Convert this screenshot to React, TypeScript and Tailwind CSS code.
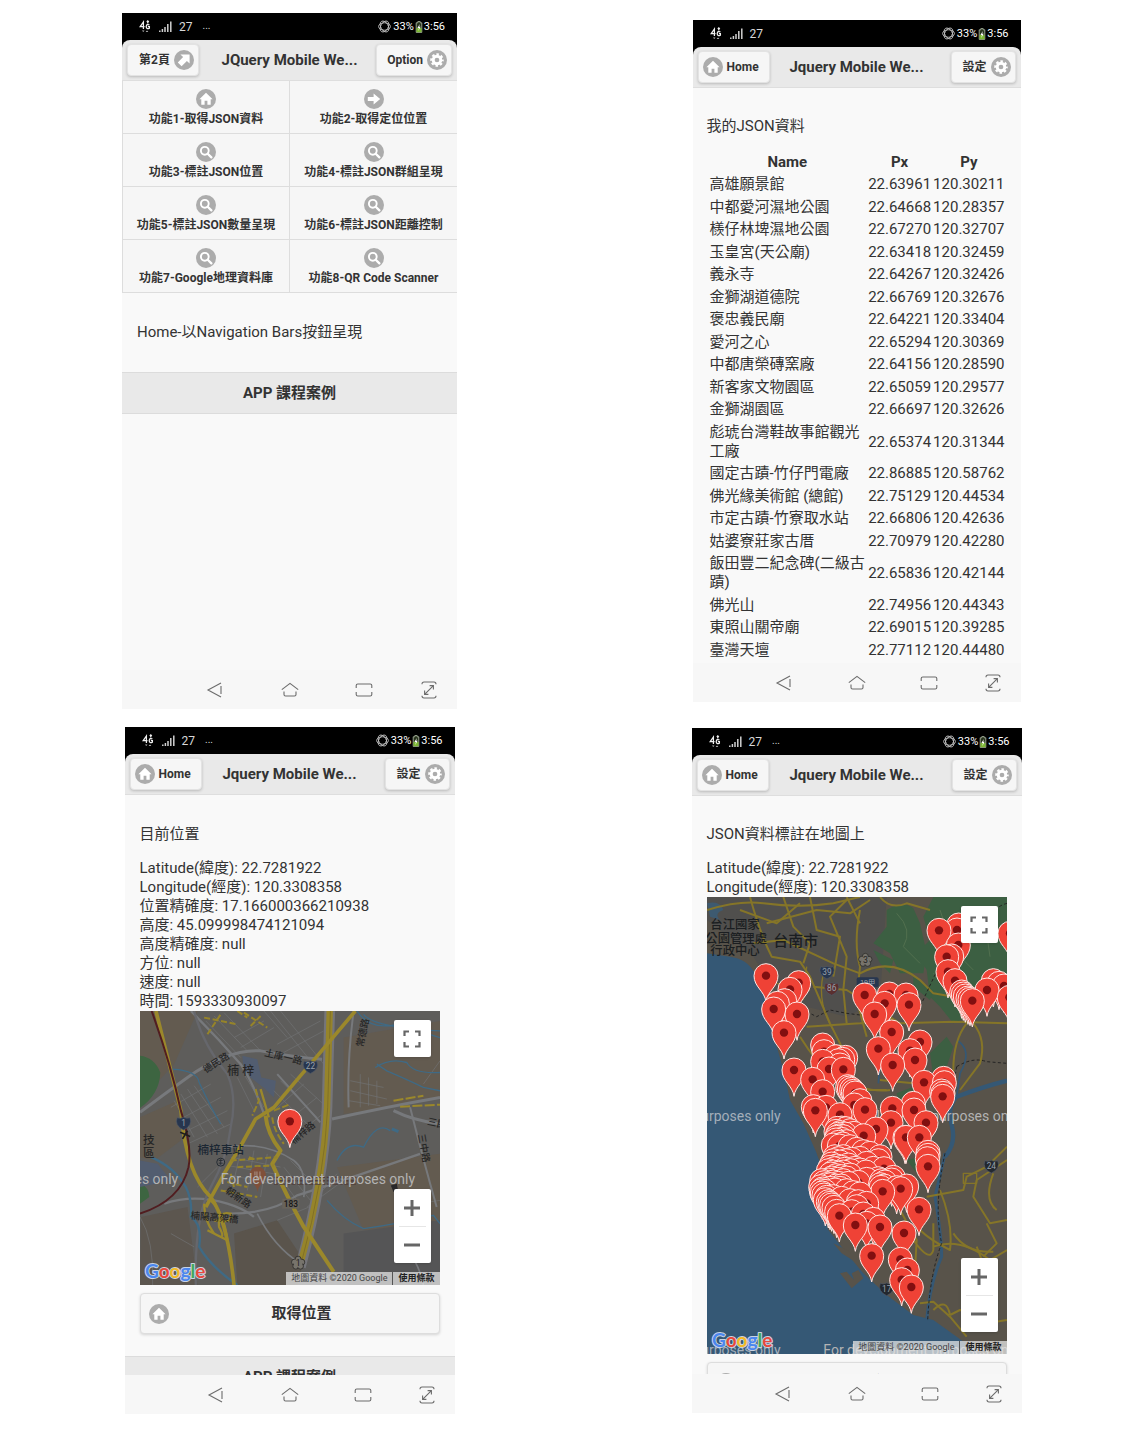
import type { ReactNode } from "react";

/* ---------- disc icons ---------- */

type IconName = "home" | "arrowRight" | "arrowUpRight" | "search" | "gear";

const glyphs: Record<IconName, ReactNode> = {
  home: <path d="M10 3.8 L3.4 10.2 L5.3 10.2 L5.3 15.8 L8.6 15.8 L8.6 11.8 L11.4 11.8 L11.4 15.8 L14.7 15.8 L14.7 10.2 L16.6 10.2 Z" fill="#fff" />,
  arrowRight: <path d="M3.8 8 H9.6 V4.4 L16.2 10 L9.6 15.6 V12 H3.8 Z" fill="#fff" />,
  arrowUpRight: <path d="M6.4 4.4 H15.6 V13.6 L12.9 10.9 L7.6 16.2 L3.8 12.4 L9.1 7.1 Z" fill="#fff" />,
  search: (
    <g fill="none" stroke="#fff">
      <circle cx="8.8" cy="8.8" r="3.9" strokeWidth="1.9" />
      <path d="M11.7 11.7 L15.4 15.4" strokeWidth="2.3" strokeLinecap="round" />
    </g>
  ),
  gear: (
    <g>
      <circle cx="10" cy="10" r="5.7" fill="none" stroke="#fff" strokeWidth="2.1" strokeDasharray="2.5 1.976" strokeDashoffset="1.25" />
      <circle cx="10" cy="10" r="3.8" fill="none" stroke="#fff" strokeWidth="2.9" />
    </g>
  ),
};

function Disc({ name }: { name: IconName }) {
  return (
    <svg viewBox="0 0 20 20" className="size-5 shrink-0" aria-hidden="true">
      <circle cx="10" cy="10" r="10" fill="#acacac" />
      {glyphs[name]}
    </svg>
  );
}

/* ---------- phone frame ---------- */

function StatusBar({ more }: { more: boolean }) {
  return (
    <div className="flex h-[27px] shrink-0 items-center justify-between bg-black pr-3 pl-[17px] text-[12px] leading-none text-[#d8d8d8]">
      <div className="flex items-center">
        <svg viewBox="0 0 11 13" className="h-[13px] w-3" aria-hidden="true">
          <g fill="none" stroke="#f0f0f0" strokeWidth="1.25">
            <path d="M3.9 9 V2 L0.7 6.6 H5" />
            <path d="M9.9 4.9 Q7 3.6 6.7 6.6 Q7 9.6 9.9 8.2 V6.6 H8.4" />
            <path d="M8.3 3.4 V1 M7.3 2 L8.3 1 L9.3 2" />
          </g>
          <path d="M2.5 10.5 H5 L3.7 12Z M6.2 12 H8.8 L7.5 10.5Z" fill="#bbb" />
        </svg>
        <svg viewBox="0 0 13 11" className="ml-2 h-[11px] w-[13px]" aria-hidden="true">
          <path d="M0.8 9.5 V11 M3.4 8 V11 M6 6 V11 M8.8 3 V11 M11.8 0.5 V11" stroke="#d0d0d0" strokeWidth="1.5" />
        </svg>
        <span className="ml-[7px]">27</span>
        {more && <span className="ml-2.5 pb-0.5 text-[10px]">...</span>}
      </div>
      <div className="flex items-center text-[11px] text-white">
        <svg viewBox="0 0 14 14" className="mr-0.5 size-[13px]" aria-hidden="true">
          <g fill="none" stroke="#c9c9c9" strokeWidth="0.9">
            <ellipse cx="7" cy="7" rx="6.4" ry="4" />
            <ellipse cx="7" cy="7" rx="6.4" ry="4" transform="rotate(60 7 7)" />
            <ellipse cx="7" cy="7" rx="6.4" ry="4" transform="rotate(120 7 7)" />
          </g>
        </svg>
        <span>33%</span>
        <svg viewBox="0 0 8 12" className="mx-px h-3 w-2" aria-hidden="true">
          <path d="M2.8 0.6 H5.2 V1.8 H6.8 V11.4 H1.2 V1.8 H2.8Z" fill="#27331c" stroke="#b9c4ae" strokeWidth="0.8" />
          <rect x="1.5" y="7" width="5" height="4.2" fill="#7cb733" />
          <path d="M4.8 3 L2.4 7 H3.9 L3.3 10 L5.7 5.8 H4.2Z" fill="#fff" />
        </svg>
        <span>3:56</span>
      </div>
    </div>
  );
}

const headerButton =
  "flex h-8 items-center gap-1 rounded border border-[#e3e3e3] bg-[#f6f6f6] px-1 text-[12px] font-bold text-[#333] shadow-[0_1px_3px_rgba(0,0,0,0.2)]";

function Header({ title, first }: { title: string; first?: boolean }) {
  return (
    <div className="shrink-0 bg-black">
      <header className="grid h-[41px] grid-cols-[1fr_auto_1fr] items-center rounded-t-lg border-b border-[#dedede] bg-[#e9e9e9] px-[5px]">
        {first ? (
          <a href="#page2" className={`${headerButton} justify-self-start pl-[11px]`}>
            第2頁
            <Disc name="arrowUpRight" />
          </a>
        ) : (
          <a href="#home" className={`${headerButton} justify-self-start pr-[10px]`}>
            <Disc name="home" />
            Home
          </a>
        )}
        <h1 className="text-[15px] leading-5 font-bold whitespace-nowrap text-[#333]">{title}</h1>
        <a href="#settings" className={`${headerButton} justify-self-end pl-[10px]`}>
          {first ? "Option" : "設定"}
          <Disc name="gear" />
        </a>
      </header>
    </div>
  );
}

const navKeys: { label: string; art: ReactNode }[] = [
  { label: "Back", art: <path d="M15 2 L2 9 L15 16 M15 5 V13" /> },
  { label: "Home screen", art: <path d="M0.8 8.6 L9 2.4 L17.2 8.6 M3 10.5 V13.6 Q3 15 4.5 15 H13.5 Q15 15 15 13.6 V10.5" /> },
  { label: "Recent apps", art: <path d="M1.2 7 V4.6 Q1.2 3 2.8 3 H15.2 Q16.8 3 16.8 4.6 V7 M1.2 11 V13.4 Q1.2 15 2.8 15 H15.2 Q16.8 15 16.8 13.4 V11" /> },
  {
    label: "Full screen",
    art: <path d="M2 3.2 Q2 1 4 1 H14 Q16 1 16 3.2 M2 14.8 Q2 17 4 17 H14 Q16 17 16 14.8 M4.6 13.4 L13.4 4.6 M9.6 4.6 H13.4 V8.4 M4.6 9.6 V13.4 H8.4" />,
  },
];

function BottomBar() {
  return (
    <div className="relative grid h-[39px] shrink-0 grid-cols-[4fr_4fr_4fr_3fr] items-center justify-items-center bg-[#f7f7f7] pl-[16.7%]">
      {navKeys.map((k) => (
        <button key={k.label} type="button" aria-label={k.label}>
          <svg viewBox="0 0 18 18" className="size-[18px]" fill="none" stroke="#6c6c6c" strokeWidth="1.1">
            {k.art}
          </svg>
        </button>
      ))}
    </div>
  );
}

function Phone({ size, title, first, more = true, children }: { size: string; title: string; first?: boolean; more?: boolean; children: ReactNode }) {
  return (
    <section className={`flex w-full flex-col overflow-hidden bg-[#f9f9f9] ${size}`}>
      <StatusBar more={more} />
      <Header title={title} first={first} />
      <div className="min-h-0 flex-1 overflow-hidden">{children}</div>
      <BottomBar />
    </section>
  );
}

function Footer() {
  return (
    <footer className="border-y border-[#dcdcdc] bg-[#e9e9e9] py-2.5 text-center text-[15px] leading-5 font-bold">APP 課程案例</footer>
  );
}

/* ---------- maps ---------- */

function Pin({ x, y }: { x: number; y: number }) {
  return (
    <g transform={`translate(${x} ${y})`}>
      <path d="M0 79 C-4 46 -36 34 -36 0 A36 36 0 0 1 36 0 C36 34 4 46 0 79Z" fill="#ef4236" stroke="#ffe6e3" strokeWidth="3" />
      <circle r="12.5" fill="#820f10" />
    </g>
  );
}

function Watermark({ x, y }: { x: number; y: number }) {
  return (
    <text x={x} y={y} fontSize="42" fill="#b3b3b3">
      For development purposes only
    </text>
  );
}

function Shield({ x, y, label, fill = "#27364f" }: { x: number; y: number; label: string; fill?: string }) {
  return (
    <g transform={`translate(${x} ${y})`}>
      <path d="M-19 -17 Q-9 -13 0 -18 Q9 -13 19 -17 Q24 -6 19 4 Q13 15 0 20 Q-13 15 -19 4 Q-24 -6 -19 -17Z" fill={fill} stroke="#4e5866" strokeWidth="2" />
      <text y="8" fontSize="25" textAnchor="middle" fill="#98a0ab">
        {label}
      </text>
    </g>
  );
}

function Plum({ x, y, label }: { x: number; y: number; label: string }) {
  return (
    <g transform={`translate(${x} ${y})`}>
      <g fill="#77746c" stroke="#2d2c2a" strokeWidth="2.5">
        <circle cx="0" cy="-11" r="9" />
        <circle cx="-11" cy="-2" r="9" />
        <circle cx="11" cy="-2" r="9" />
        <circle cx="-7" cy="10" r="9" />
        <circle cx="7" cy="10" r="9" />
      </g>
      <circle r="13" fill="#77746c" />
      <text y="9" fontSize="26" textAnchor="middle" fill="#222">
        {label}
      </text>
    </g>
  );
}

const logoLetters: [string, string][] = [
  ["G", "#4b86ee"],
  ["o", "#e8483c"],
  ["o", "#f2b928"],
  ["g", "#4b86ee"],
  ["l", "#3fa95c"],
  ["e", "#e8483c"],
];

function MapFrame({ children }: { children: ReactNode }) {
  return (
    <div className="relative overflow-hidden">
      {children}
      <button type="button" aria-label="全螢幕" className="absolute top-[9px] right-[9px] flex size-[37px] items-center justify-center rounded-xs bg-white shadow-sm">
        <svg viewBox="0 0 18 18" className="size-[18px]" fill="none" stroke="#666" strokeWidth="2.2">
          <path d="M1.5 6 V1.5 H6 M12 1.5 H16.5 V6 M16.5 12 V16.5 H12 M6 16.5 H1.5 V12" />
        </svg>
      </button>
      <div className="absolute right-[9px] bottom-[22px] flex w-[37px] flex-col items-center rounded-xs bg-white shadow-sm">
        <button type="button" aria-label="放大" className="flex h-[37px] w-full items-center justify-center">
          <svg viewBox="0 0 18 18" className="size-[18px]" stroke="#666" strokeWidth="3">
            <path d="M1 9 H17 M9 1 V17" />
          </svg>
        </button>
        <div className="h-px w-[27px] bg-[#e6e6e6]" />
        <button type="button" aria-label="縮小" className="flex h-9 w-full items-center justify-center">
          <svg viewBox="0 0 18 18" className="size-[18px]" stroke="#666" strokeWidth="3">
            <path d="M1 9 H17" />
          </svg>
        </button>
      </div>
      <svg viewBox="0 0 66 26" className="absolute bottom-0 left-[3px] h-[26px] w-[66px]" role="img" aria-label="Google">
        <text x="2" y="19" fontSize="19" fontFamily="Lato, sans-serif" fontWeight="700" stroke="#c9d3e2" strokeWidth="2" strokeLinejoin="round" paintOrder="stroke">
          {logoLetters.map(([ch, color], i) => (
            <tspan key={i} fill={color}>
              {ch}
            </tspan>
          ))}
        </text>
      </svg>
      <div className="absolute right-0 bottom-0 flex h-[13px] items-center text-[9px] leading-[13px] text-[#444]">
        <span className="bg-[#e4e4e4]/75 px-[5px]">地圖資料 ©2020 Google</span>
        <a href="#terms" className="border-l border-[#555] bg-[#e4e4e4]/75 px-[5px] font-bold text-[#222]">
          使用條款
        </a>
      </div>
    </div>
  );
}

function CityMap() {
  return (
    <MapFrame>
      <svg viewBox="27 30 903 825" className="block w-full" role="img" aria-label="目前位置地圖">
        <rect x="27" y="30" width="903" height="825" fill="#5e5d5b" />
        <g fill="#635b50">
          <path d="M27 30 H200 L130 190 L27 300Z" />
          <path d="M640 110 L930 60 V290 L780 320 L640 340Z" />
          <path d="M27 350 L140 300 L150 420 L70 480 L27 470Z" />
          <path d="M620 500 L930 460 V680 L700 690Z" />
          <path d="M310 700 L440 660 L520 780 L500 855 H320Z" fill="#5a544c" />
          <path d="M30 650 L170 620 L200 855 H27Z" fill="#5c564f" />
        </g>
        <path d="M640 700 L930 660 V855 H640Z" fill="#555556" />
        <path d="M27 165 Q70 170 88 215 Q86 280 27 322Z M27 550 Q55 560 55 590 L27 610Z" fill="#3d6541" />
        <path d="M335 165 L380 175 L392 230 L436 240 L430 290 L400 262 L340 215Z M27 480 L80 490 L120 540 L27 560Z" fill="#525d70" />
        {/* street grid */}
        <g fill="none" stroke="#717274" strokeWidth="2">
          <path d="M225 60 L330 170 M250 45 L350 150 M280 35 L390 150 M310 110 L400 60 M330 140 L430 80 M420 30 L540 180 M450 30 L580 190 M440 130 L570 60 M450 160 L580 90 M400 30 L470 110" />
          <path d="M130 300 L190 410 M150 280 L230 410 M170 265 L260 400 M190 255 L280 380 M120 320 L240 250 M140 360 L270 290 M150 400 L290 330 M170 430 L300 370 M320 230 L370 330 M340 220 L400 320" />
          <path d="M450 240 L560 350 M430 270 L540 380 M480 220 L590 320 M430 330 L520 250 M460 370 L560 290 M500 400 L590 330 M660 240 L760 260 M660 270 L770 295 M690 220 V320 M715 230 V315 M740 240 V310 M655 300 L750 315" />
          <path d="M200 560 L260 500 M300 470 L450 500 M290 495 L430 520 M280 520 L420 550 M330 450 L310 540 M370 450 L350 570 M410 460 L390 590 M440 520 L500 600 M460 500 L540 600 M480 480 L560 560 M560 590 L620 520 M530 620 L640 540" />
          <path d="M440 660 L560 610 M27 650 Q70 720 65 855 M120 700 L190 740 M880 250 L930 180 M800 620 L930 600" />
        </g>
        <g fill="none" stroke="#77797c" strokeWidth="9">
          <path d="M27 335 Q100 280 170 230 Q290 145 390 150 Q500 170 575 175" />
          <path d="M180 30 Q260 110 330 190 Q370 250 400 340" strokeWidth="7" />
          <path d="M605 355 Q760 320 930 290 M790 330 Q850 360 930 370" />
          <path d="M300 640 Q420 640 500 585 Q640 540 870 460" strokeWidth="7" />
          <path d="M100 610 Q190 580 290 610 Q340 625 370 650" strokeWidth="7" />
          <path d="M190 30 Q215 130 290 220 Q320 290 300 380 Q290 470 240 560 Q190 650 195 855" stroke="#66676c" strokeWidth="7" />
          <path d="M670 30 Q650 180 655 320 M840 320 Q880 480 920 620 M440 220 L570 365" strokeWidth="6" />
          <path d="M290 440 Q400 420 490 480 Q530 510 520 590 M380 640 Q430 740 510 790 M800 730 Q860 760 880 855" strokeWidth="5" />
        </g>
        <g fill="none" stroke="#3f6a85" strokeWidth="4">
          <path d="M125 205 Q200 210 205 245 Q240 320 270 370 M680 30 Q720 90 800 70 L930 110 M700 40 Q730 80 930 90" />
          <path d="M735 200 Q780 170 830 185 Q850 220 930 215 M740 190 L770 210 Q840 240 880 260 L930 270 M620 480 Q650 420 700 440 Q740 360 780 390" />
          <path d="M590 600 Q640 660 700 685 Q810 670 910 645 L930 670" />
          <path d="M60 470 Q130 500 165 560 Q185 600 180 650 Q215 670 205 740 Q240 800 320 855" strokeWidth="7" />
          <path d="M785 385 L805 393" strokeWidth="9" />
        </g>
        {/* trunk roads */}
        <g fill="none" strokeLinejoin="round">
          <path d="M598 30 L590 320 Q580 540 510 800" stroke="#75757a" strokeWidth="32" />
          <path d="M598 30 L590 320 Q580 540 510 790" stroke="#96842a" strokeWidth="19" />
          <path d="M600 30 L592 320 Q582 540 512 790" stroke="#766723" strokeWidth="2" />
          <path d="M675 30 L540 190 Q480 260 430 320 L375 355 Q330 440 280 520 L225 620" stroke="#9b882b" strokeWidth="11" />
          <path d="M75 30 L150 330 Q165 520 240 590 Q290 660 310 855" stroke="#9b882b" strokeWidth="11" />
          <path d="M405 345 Q410 400 450 450 L425 490 Q470 590 520 680 L610 815" stroke="#9b882b" strokeWidth="12" />
          <path d="M390 265 L415 350 M220 610 Q220 660 250 700 Q290 725 265 680 Q260 630 300 640 Q310 670 250 660 M240 600 Q280 640 290 720 L230 690" stroke="#9b882b" strokeWidth="7" />
          <path d="M375 265 L385 300 L365 345 M425 350 Q430 390 460 430 M430 330 L480 310" stroke="#968429" strokeWidth="6" strokeDasharray="20 7" />
          <path d="M220 50 L320 70 M340 35 L410 80 M230 100 L270 40 M360 75 L390 45 M320 30 L350 50 M270 570 L380 590 M290 545 L350 560 M300 480 L440 470 M320 500 L430 495 M300 520 L310 560 M355 470 L380 480" stroke="#968429" strokeWidth="6" strokeDasharray="18 8" />
          <path d="M790 300 L880 285 M810 318 L930 312" stroke="#9b882b" strokeWidth="6" strokeDasharray="30 7" />
          <path d="M62 30 Q120 190 150 330 Q185 440 173 500 Q150 600 27 640" stroke="#511d20" strokeWidth="6" />
        </g>
        <path d="M148 395 L178 408 M155 415 L170 390" stroke="#1d1d1d" strokeWidth="5" />
        {/* dining place with its worn label */}
        <path d="M381 575 C378 550 356 545 356 524 A25 25 0 0 1 406 524 C406 545 384 550 381 575Z" fill="#80503a" />
        <path d="M373 513 V525 M379 513 V536 M388 513 V536" stroke="#a9948a" strokeWidth="3" />
        <path d="M430 531 H680 M430 541 H680 M430 551 H680" fill="none" stroke="#513f3b" strokeWidth="4" strokeDasharray="12 5 18 6 7 5" />
        <g fontSize="29" fill="#262626" fontWeight="500">
          <text transform="translate(225 218) rotate(-33)">德民路</text>
          <text transform="translate(400 165) rotate(13)">土庫一路</text>
          <text transform="translate(698 140) rotate(-78)">常德路</text>
          <text transform="translate(490 432) rotate(-40)">楠梓路</text>
          <text transform="translate(282 575) rotate(35)">朝新路</text>
          <text transform="translate(178 655) rotate(5)">楠陽高架橋</text>
          <text transform="translate(864 402) rotate(80)">三中路</text>
          <text transform="translate(890 372) rotate(12)">三民</text>
          <text x="290" y="224" fontSize="36">
            楠 梓
          </text>
          <text x="200" y="461" fontSize="35" fill="#1c2733">
            楠梓車站
          </text>
          <text x="36" y="431" fontSize="35">
            技
          </text>
          <text x="36" y="470" fontSize="35">
            區
          </text>
          <rect x="455" y="595" width="52" height="30" fill="#68635b" />
          <text x="460" y="619" fontSize="25" fill="#161616">
            183
          </text>
        </g>
        <circle cx="270" cy="485" r="12" fill="none" stroke="#252c33" strokeWidth="3" />
        <path d="M264 480 H276 M264 488 H276 M270 476 V494" stroke="#252c33" strokeWidth="2.5" />
        <path d="M782 555 L800 550 L804 572 L790 575Z" fill="#28282a" />
        <Shield x={540} y={198} label="22" />
        <Shield x={158} y={368} label="1" />
        <Plum x={503} y={788} label="1" />
        <Watermark x={270} y={551} />
        <text x="142" y="551" fontSize="42" fill="#b3b3b3" textAnchor="end">
          es only
        </text>
        <Pin x={478} y={362} />
      </svg>
    </MapFrame>
  );
}

const pins: [number, number][] = [
  [198, 257], [296, 278], [270, 298], [254, 332], [232, 340], [221, 357], [291, 372], [252, 428], [282, 540],
  [717, 121], [776, 105], [771, 120], [775, 165], [755, 198], [740, 200], [744, 245], [765, 272], [785, 306], [790, 312],
  [796, 318], [804, 324], [810, 328], [817, 332], [861, 300], [880, 272], [897, 280], [912, 288], [930, 130], [928, 322],
  [494, 315], [568, 312], [618, 315], [554, 340], [627, 344], [524, 372], [575, 426], [535, 476], [578, 525],
  [660, 456], [630, 482], [645, 510],
  [368, 465], [372, 485], [437, 502], [408, 500], [368, 514], [428, 508], [415, 512], [387, 537], [420, 525], [430, 538],
  [338, 568], [368, 605], [443, 590], [448, 594], [455, 598], [460, 604], [465, 609], [480, 632], [463, 645], [495, 659],
  [340, 650], [378, 652], [346, 661], [420, 674], [577, 655], [640, 640], [642, 660], [573, 698], [678, 698], [528, 717],
  [672, 577], [731, 565], [733, 578], [725, 603], [729, 610], [728, 619],
  [412, 715], [425, 714], [438, 716], [450, 722], [408, 724], [420, 728], [435, 732], [462, 730], [491, 737], [615, 742],
  [618, 742], [658, 742], [410, 742], [425, 748], [440, 755], [400, 765], [418, 768], [450, 770], [470, 778], [490, 785],
  [413, 733], [417, 738], [430, 740], [408, 750], [415, 757], [428, 762],
  [510, 790], [684, 787], [684, 796], [682, 806], [684, 829], [540, 800], [535, 812], [552, 836], [405, 800], [415, 806],
  [430, 800], [455, 808], [480, 805], [500, 820], [395, 822], [410, 828], [425, 832], [445, 825], [465, 835], [520, 835],
  [400, 812], [420, 816], [438, 812], [390, 832], [403, 836], [434, 838], [452, 842], [480, 840], [498, 846],
  [385, 842], [400, 846], [415, 850], [430, 846], [450, 855], [580, 862], [575, 870], [475, 877], [500, 868], [535, 866],
  [545, 872], [555, 876], [365, 872], [372, 878], [385, 870], [400, 876], [415, 880], [430, 872], [445, 880], [590, 893],
  [392, 852], [408, 857], [424, 860], [440, 864], [395, 864], [412, 868], [378, 884], [392, 884], [408, 888], [424, 888],
  [602, 896], [620, 888], [362, 890], [368, 897], [375, 904], [390, 895], [405, 900], [420, 895], [440, 902], [460, 908],
  [541, 884], [552, 888], [543, 892], [548, 904], [480, 912], [372, 915], [380, 922], [400, 920], [425, 925], [450, 932],
  [475, 935], [500, 940], [364, 902], [367, 909], [376, 929], [385, 935], [390, 940], [395, 945], [402, 952], [410, 964],
  [470, 950], [418, 977], [455, 965], [490, 972], [657, 958], [520, 988], [500, 1000],
  [466, 1005], [540, 1011], [612, 1029], [515, 1097], [601, 1108], [622, 1140], [605, 1169], [634, 1191],
];

const orderedPins = [...pins].sort((a, b) => a[1] - b[1]);

function RegionMap() {
  return (
    <MapFrame>
      <svg viewBox="21 21 900 1371" className="block w-full" role="img" aria-label="JSON資料標註地圖">
        <rect x="21" y="21" width="900" height="1371" fill="#58534a" />
        <path d="M21 21 H560 L540 330 L440 380 L240 330 L160 200 L21 90Z" fill="#504f4d" />
        {/* hills */}
        <g fill="#3c5f42">
          <path d="M560 60 Q610 30 640 55 L660 100 L680 190 L670 250 L600 250 L570 190 L520 160 L560 110Z" />
          <path d="M700 21 H921 V270 L880 290 L850 360 L760 400 L720 350 L690 320 L680 240 L650 190 L690 150 L670 80Z" />
          <path d="M690 490 L740 440 L760 470 L740 530 L700 560Z M590 610 L640 590 L650 620 L600 640Z M620 810 L660 800 L650 850Z M520 180 L580 210 L570 250 L540 220Z" />
          <path d="M640 260 L700 300 L690 330 L640 290Z" />
        </g>
        <g fill="none" stroke="#52704f" strokeWidth="3">
          <path d="M590 70 Q640 120 610 170 L660 220 M720 60 L760 180 L820 240 M700 250 L760 330 M850 60 L870 200 M780 350 L830 300" />
        </g>
        {/* sea */}
        <path
          d="M21 190 L90 200 Q140 205 165 250 L200 330 L225 450 L250 540 L270 630 L310 700 L350 790 L375 860 L350 920 L385 1020 L440 1090 L490 1150 L560 1215 L640 1275 L700 1290 L770 1340 L840 1392 H21Z"
          fill="#355875"
        />
        <path d="M420 1150 L440 1145 L462 1170 L455 1150 L475 1140 L490 1165 L455 1195Z M400 1060 L450 1085 L465 1115 L425 1090Z M350 790 L375 850 L370 790Z" fill="#58534a" />
        <path d="M21 40 Q60 30 70 60 Q40 70 60 90 L30 80Z" fill="#3d5a70" />
        {/* rivers */}
        <g fill="none" stroke="#355875">
          <path d="M921 572 Q850 590 770 620 Q740 650 755 705 Q770 760 735 800" strokeWidth="13" />
          <path d="M735 790 Q720 860 705 920 Q725 1040 725 1100 Q690 1180 680 1290" strokeWidth="9" />
          <path d="M770 450 Q820 480 780 550 L770 620 M540 520 L535 580" strokeWidth="5" />
        </g>
        {/* roads */}
        <g fill="none" stroke="#857528" strokeWidth="6" strokeLinejoin="round">
          <path d="M150 21 Q180 130 215 200 L300 215 L330 260 L390 400 L440 500 M120 60 L230 100 L300 40 M250 21 L280 110 L330 160 L310 220 M330 21 L350 120 L420 140 L400 260 M440 30 L390 80 L440 200 L430 300 L440 400" />
          <path d="M21 60 Q120 30 190 40 Q300 55 400 40 L480 21 M200 100 L350 60 L450 70 L510 30 M160 160 L250 150 L400 220 L480 250 Q570 200 660 270 L700 310 L760 320" />
          <path d="M480 60 Q460 160 480 230 L470 330 L500 440 M340 290 L440 300 L600 400 L760 395 L921 400 M320 410 L480 400 L580 390 M440 21 L480 100 M540 21 Q570 60 620 40 L690 60" />
          <path d="M800 400 Q760 450 760 540 L740 600 M820 400 Q860 450 840 520 L780 600 M300 440 Q350 520 400 560 Q500 610 570 600 M480 600 L560 600 M540 570 L640 580" />
          <path d="M921 770 L860 830 L800 860 L790 900 L680 920 M921 810 L830 870 L820 920 L870 1000 L921 990 M720 900 Q760 1000 750 1080 Q690 1050 660 1020 M760 1030 Q800 1090 880 1085" />
          <path d="M640 1050 Q690 1120 700 1080 L700 1000 M600 960 L650 1050 L640 1230 M700 1070 Q780 1040 870 1110 L921 1080 M830 1070 L880 1200 L840 1270 L780 1260 L750 1275" />
          <path d="M700 1260 Q740 1220 750 1275 M660 1240 L700 1235 L750 1280 L800 1340 M860 1000 L890 1060 L850 1100 M880 850 Q850 930 890 960 M860 1300 L921 1290" />
          <path d="M790 850 H830 V880 H790Z M320 230 L310 330 M230 280 L330 300 M370 250 Q350 340 400 420" strokeWidth="4" />
        </g>
        <g fill="none" stroke="#242424" strokeWidth="3" strokeDasharray="9 7">
          <path d="M921 40 Q880 50 860 100 M320 365 L350 380 L390 360 L440 370 L480 375 M740 180 L660 350 M770 530 Q820 500 860 515 L921 520 M770 530 L750 640 M735 790 Q700 950 725 1060 Q690 1150 683 1290" />
        </g>
        <g fill="#1b1e21" fontSize="37" fontWeight="500">
          <text x="31" y="118">台江國家</text>
          <text x="16" y="159">公園管理處</text>
          <text x="31" y="195">行政中心</text>
          <text x="220" y="167" fontSize="45">
            台南市
          </text>
        </g>
        <Shield x={381} y={247} label="39" />
        <Shield x={395} y={296} label="86" fill="#5a2f2f" />
        <g>
          <rect x="470" y="262" width="66" height="30" rx="6" fill="#27364f" />
          <text x="503" y="285" fontSize="22" textAnchor="middle" fill="#98a0ab">
            19甲
          </text>
        </g>
        <Plum x={496} y={210} label="3" />
        <Shield x={874} y={829} label="24" fill="#23282f" />
        <Shield x={560} y={1197} label="17" fill="#23282f" />
        <g>
          <Watermark x={370} y={694} />
          <Watermark x={370} y={1395} />
          <text x="242" y="694" fontSize="42" fill="#a4afba" textAnchor="end">
            urposes only
          </text>
          <text x="242" y="1395" fontSize="42" fill="#a4afba" textAnchor="end">
            urposes only
          </text>
        </g>
        {orderedPins.map(([x, y]) => (
          <Pin key={`${x}-${y}`} x={x} y={y} />
        ))}
      </svg>
    </MapFrame>
  );
}

/* ---------- data ---------- */

const features: { icon: IconName; label: string }[] = [
  { icon: "home", label: "功能1-取得JSON資料" },
  { icon: "arrowRight", label: "功能2-取得定位位置" },
  { icon: "search", label: "功能3-標註JSON位置" },
  { icon: "search", label: "功能4-標註JSON群組呈現" },
  { icon: "search", label: "功能5-標註JSON數量呈現" },
  { icon: "search", label: "功能6-標註JSON距離控制" },
  { icon: "search", label: "功能7-Google地理資料庫" },
  { icon: "search", label: "功能8-QR Code Scanner" },
];

const places: [string, string, string][] = [
  ["高雄願景館", "22.63961", "120.30211"],
  ["中都愛河濕地公園", "22.64668", "120.28357"],
  ["檨仔林埤濕地公園", "22.67270", "120.32707"],
  ["玉皇宮(天公廟)", "22.63418", "120.32459"],
  ["義永寺", "22.64267", "120.32426"],
  ["金獅湖道德院", "22.66769", "120.32676"],
  ["褒忠義民廟", "22.64221", "120.33404"],
  ["愛河之心", "22.65294", "120.30369"],
  ["中都唐榮磚窯廠", "22.64156", "120.28590"],
  ["新客家文物園區", "22.65059", "120.29577"],
  ["金獅湖園區", "22.66697", "120.32626"],
  ["彪琥台灣鞋故事館觀光工廠", "22.65374", "120.31344"],
  ["國定古蹟-竹仔門電廠", "22.86885", "120.58762"],
  ["佛光緣美術館 (總館)", "22.75129", "120.44534"],
  ["市定古蹟-竹寮取水站", "22.66806", "120.42636"],
  ["姑婆寮莊家古厝", "22.70979", "120.42280"],
  ["飯田豐二紀念碑(二級古蹟)", "22.65836", "120.42144"],
  ["佛光山", "22.74956", "120.44343"],
  ["東照山關帝廟", "22.69015", "120.39285"],
  ["臺灣天壇", "22.77112", "120.44480"],
];

const readings = [
  "Latitude(緯度): 22.7281922",
  "Longitude(經度): 120.3308358",
  "位置精確度: 17.166000366210938",
  "高度: 45.099998474121094",
  "高度精確度: null",
  "方位: null",
  "速度: null",
  "時間: 1593330930097",
];

function LocateButton() {
  return (
    <button type="button" className="relative mt-2 flex h-[41px] w-full items-center justify-center rounded border border-[#dddddd] bg-[#f6f6f6] pl-6 text-[15px] font-bold shadow-[0_1px_3px_rgba(0,0,0,0.15)]">
      <span className="absolute left-2">
        <Disc name="home" />
      </span>
      取得位置
    </button>
  );
}

export default function App() {
  return (
    <main
      lang="zh-Hant"
      className="grid min-h-screen grid-cols-2 content-start items-center justify-items-center gap-y-[18px] bg-white px-1.5 pt-[13px] font-['Roboto','Noto_Sans_CJK_TC',sans-serif] text-[15px] leading-[19px] text-[#333]"
    >
      <Phone size="max-w-[335px] aspect-[335/696]" title="JQuery Mobile We..." first>
        <nav className="grid grid-cols-2 border-l border-[#dddddd]">
          {features.map((f) => (
            <a key={f.label} href="#feature" className="flex h-[53px] flex-col items-center justify-end gap-0.5 border-b border-[#dddddd] bg-[#f6f6f6] pb-1.5 text-[12px] leading-4 font-bold odd:border-r">
              <Disc name={f.icon} />
              {f.label}
            </a>
          ))}
        </nav>
        <p className="px-[15px] py-[30px]">Home-以Navigation Bars按鈕呈現</p>
        <Footer />
      </Phone>

      <Phone size="max-w-[328px] aspect-[328/682]" title="Jquery Mobile We..." more={false}>
        <div className="px-3.5 pt-[29px]">
          <p className="mb-[15px]">我的JSON資料</p>
          <table className="w-full border-separate border-spacing-[2px]">
            <thead>
              <tr>
                <th className="p-0 pb-px">Name</th>
                <th className="p-0 pb-px">Px</th>
                <th className="p-0 pb-px">Py</th>
              </tr>
            </thead>
            <tbody>
              {places.map(([name, px, py]) => (
                <tr key={name} className="even:[&>td]:pt-px [&>td]:pb-px">
                  <td className="pl-px">{name}</td>
                  <td>{px}</td>
                  <td>{py}</td>
                </tr>
              ))}
            </tbody>
          </table>
        </div>
      </Phone>

      <Phone size="max-w-[330px] aspect-[330/687]" title="Jquery Mobile We...">
        <div className="px-[15px] pt-[30px] pb-[22px]">
          <p className="mb-[15px]">目前位置</p>
          <div>
            {readings.map((r) => (
              <p key={r}>{r}</p>
            ))}
          </div>
          <CityMap />
          <LocateButton />
        </div>
        <Footer />
      </Phone>

      <Phone size="max-w-[330px] aspect-[330/685]" title="Jquery Mobile We...">
        <div className="px-[15px] pt-[29px] pb-[22px]">
          <p className="mb-[15px]">JSON資料標註在地圖上</p>
          <div>
            {readings.slice(0, 2).map((r) => (
              <p key={r}>{r}</p>
            ))}
          </div>
          <RegionMap />
          <LocateButton />
        </div>
        <Footer />
      </Phone>
    </main>
  );
}
